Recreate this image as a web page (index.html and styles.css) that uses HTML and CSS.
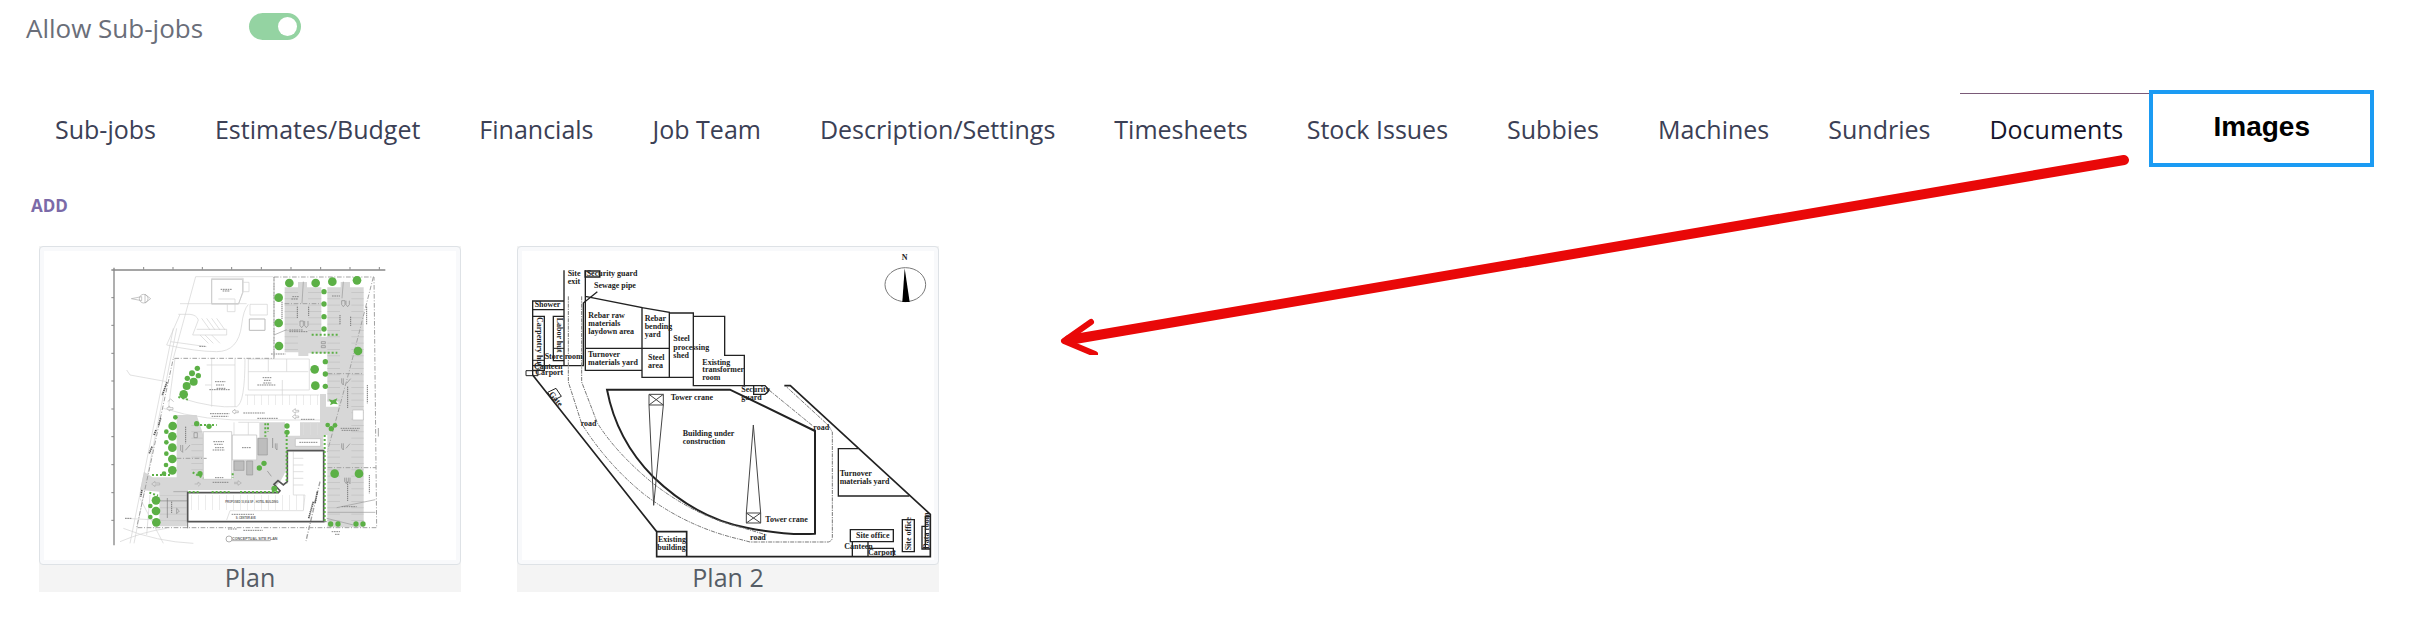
FILE: index.html
```html
<!DOCTYPE html>
<html lang="en">
<head>
  <meta charset="UTF-8" />
  <meta name="viewport" content="width=device-width, initial-scale=1.0"/>
  <title>Job - Images</title>

  <link rel="stylesheet" href="styles.css">
</head>

<body>
  <div class="setting">
    <label for="allowSubJobs">Allow Sub-jobs</label>
    <input type="checkbox" id="allowSubJobs" class="toggle" checked>
  </div>

  <nav class="tabs">
    <button class="tab">Sub-jobs</button>
    <button class="tab">Estimates/Budget</button>
    <button class="tab">Financials</button>
    <button class="tab">Job Team</button>
    <button class="tab">Description/Settings</button>
    <button class="tab">Timesheets</button>
    <button class="tab">Stock Issues</button>
    <button class="tab">Subbies</button>
    <button class="tab">Machines</button>
    <button class="tab">Sundries</button>
    <button class="tab active">Documents</button>
    <button class="tab-images">Images</button>
  </nav>

  <main class="content">
    <button class="add-button">ADD</button>

    <div class="gallery">
      <figure class="card">
        <div class="thumb">
          <svg viewBox="42 48 1236 928" role="img" aria-label="Site plan">
            <defs>
              <pattern id="bays" width="40" height="19" patternUnits="userSpaceOnUse">
                <path d="M0 1H40" stroke="#bbb" stroke-width="2"/>
              </pattern>
              <pattern id="stalls" width="21" height="40" patternUnits="userSpaceOnUse">
                <path d="M1 0V40" stroke="#ddd" stroke-width="2"/>
              </pattern>
            </defs>

            <!-- sheet frame -->
            <g fill="none" stroke="#888" stroke-width="4">
              <path d="M244 105H1066M252 98V931"/>
              <path stroke-width="3" d="M341 96v8M429 96v8M517 96v8M605 96v8M694 96v8M783 96v8M872 96v8M960 96v8M1048 96v8M244 188h8M244 271h8M244 355h8M244 438h8M244 522h8M244 605h8M244 689h8M244 773h8M244 856h8"/>
            </g>

            <!-- car parks -->
            <g fill="#d7d7d7">
              <path d="M764 157H804V141H831V157H874V305H892V157H932V141H960V157H1001V877H892V600H870V477H888V515H925V500H892V355H835V363H805V352H764Z"/>
              <path d="M440 540H500L520 600V733H608V676H680V608H688V562H765V602H810V562H880V645H770V700Q755 745 725 765H474V874H388V770L330 765L342 710L368 727H440Z"/>
            </g>
            <g fill="url(#bays)">
              <path d="M764 157H804V352H764ZM834 157H874V300H834ZM892 157H930V500H892ZM964 157H1001V865H964ZM892 620H930V865H892ZM484 560H518V720H484ZM390 780H470V870H390Z"/>
            </g>
            <g fill="url(#stalls)">
              <path d="M645 480H868V510H645ZM474 780H825V825H474ZM810 562H880V600H810Z"/>
            </g>
            <path d="M520 590H605V733H520ZM607 600H680V675H607ZM796 611H872V634H796ZM968 525H1000V555H968Z" fill="#fff" stroke="#bbb" stroke-width="2"/>
            <path d="M684 610H712V660H684ZM612 678H642V706H612ZM650 678H668V720H650Z" fill="#bdbdbd" stroke="#999" stroke-width="2"/>

            <!-- outlines of the lots and existing buildings -->
            <g fill="none" stroke="#d2d2d2" stroke-width="2">
              <path d="M497 125L430 370M497 125H730M545 130H640V170L625 208H545ZM565 192H615V230H592V208M640 142H657V170H640M450 206H650M660 208H712V240H660ZM445 238H480Q500 240 505 255L488 300H590V283H500M450 238L410 330M410 330Q500 350 560 350Q625 350 635 270Q640 225 655 208"/>
              <path d="M515 250L540 285M530 250L555 285M545 250L570 285M560 250L585 285M510 300L535 325M525 300L550 325M545 300L570 325"/>
              <path d="M430 280L300 925M440 280L312 925M422 320L530 335M435 370L415 520M290 405L300 420L410 440M455 490Q550 520 620 515Q645 505 645 370M400 520Q520 560 690 555H870"/>
              <path d="M545 372V515M615 372V515M655 372H838V465H655ZM655 410H835M715 372V410M770 372V410M645 480H868M757 435V480M530 390H615M525 450H545M612 562V600M655 562V600M625 562H688"/>
              <path d="M600 827H820L825 780M600 827L590 855M790 650V780H825M790 670H820M790 690H820M790 710H820M790 730H820M790 750H820M285 850L480 860M280 880Q380 920 490 925M270 920Q340 890 410 880M330 790L400 925M360 780L350 900"/>
              <path d="M658 252H705V286H658Z" stroke="#bbb" stroke-width="3"/>
              <path d="M545 133H638V172L626 206H545Z" stroke="#ccc" stroke-width="3"/>
            </g>

            <!-- site boundary -->
            <g fill="none" stroke="#a2a2a2" stroke-width="3" stroke-dasharray="14 5 3 5">
              <path d="M732 126H1032L1040 878H320L430 370H732Z"/>
              <path d="M732 126V370M1030 126L960 400L892 650M893 416H1001M893 698H1038M440 670H530M764 206H874"/>
              <path d="M870 740L828 918" stroke-width="4"/>
            </g>
            <path d="M893 832H1036M920 818L1036 794M732 300L770 284M820 140L816 205M940 140L936 190M390 797H474M430 770H474M890 850L970 870" fill="none" stroke="#999" stroke-width="2"/>

            <!-- proposed hotel -->
            <path d="M473 773H745L750 767L732 748L744 737L760 750L772 740V647H881V860H473Z" fill="none" stroke="#555" stroke-width="5"/>
            <path d="M473 860V880M881 860H890" stroke="#777" stroke-width="3"/>

            <!-- north arrow and flow arrows -->
            <g fill="none" stroke="#aaa" stroke-width="2">
              <path d="M304 191L335 185V197ZM362 191L345 178V204Z"/>
              <circle cx="341" cy="191" r="13"/>
              <path d="M365 747l10-8v5h14v6h-14v5zM494 747h10v-6l8 6l-8 7M612 742h12v-5l10 7l-10 7v-5h-12M413 500l9-8l9 8M410 520l9-7v5h10v6h-10v4zM606 530l9-7v5h10v5h-10v4zM787 528l9-7v5h10v5h-10v4zM787 545l9-7v5h10v5h-10v4z"/>
            </g>
            <g fill="none" stroke="#888" stroke-width="2">
              <path d="M810 258v14l5 6l5-6v-14zM824 258v14l5 6l5-6v-14M935 197v12l5 6l5-6v-12zM948 197v12l5 6l5-6v-12M874 320h12v6h-12zM874 332h12v6h-12zM935 430v14l5 6v-20M950 445l12-14M935 625v14l5 6v-20M948 640l12-14M944 728v12l5 6v-18M955 728v12l5 6v-18M452 630v16l6 6v-22M466 646l14-16M736 625v14l5 6v-20M712 708l12 16M492 593h10v15h-10zM440 820l8 8l-8 8z"/>
              <path d="M756 200V252M802 215V250M836 215V245M930 240V270M962 245V275M1010 215V270M953 455V520M1012 450V505M953 740V800M1018 720V775M1045 580V605M467 575V625M412 790V850M728 610V640M425 800V835" stroke="#777" stroke-width="3" stroke-dasharray="4 2"/>
              <path d="M787 185H808M784 192H804M906 183H930M778 290H834M778 285H820M723 357H766M813 553H855M932 580H990M935 586H985M935 815H980M572 163H606M578 168H600M508 334H526M555 440H586M558 450H582M560 460H586M538 464H600M698 428H726M702 436H722M700 444H724M682 450H738M540 536H598M545 544H595M640 534H705M682 550H744M550 620H582M553 628H578M555 638H582M548 645H584M636 638H662M548 742H596M808 622H862M555 728H580M605 838H672M905 890H930M915 898H930M640 886H698M285 850H305M594 882H620" stroke-width="3" stroke-dasharray="5 2"/>
              <path d="M411 442L396 482M392 550L386 570M378 585L372 600M366 635L358 655M336 765L332 785M850 800L836 850M862 770L855 805" stroke="#555" stroke-width="5" stroke-dasharray="4 2"/>
            </g>

            <g class="plan-text">
              <text x="586" y="805">PROPOSED 10,914 SF - HOTEL BUILDING</text>
              <text x="617" y="852">S. CENTER AVE</text>
              <text x="606" y="915" class="plan-title">CONCEPTUAL SITE PLAN</text>
            </g>
            <circle cx="597" cy="912" r="9" fill="none" stroke="#888" stroke-width="2"/>
            <path d="M606 917H722" stroke="#888" stroke-width="2"/>

            <!-- hedges -->
            <g fill="none" stroke="#5cb046" stroke-width="6" stroke-dasharray="6 6">
              <path d="M845 299H925M845 353H922M366 720H425M510 570H560M770 600V745"/>
              <path d="M884 600V858M476 771H510M545 771H600M630 771H745M706 565V605M714 565V590M488 712L520 730M608 715V728M358 773L384 782M445 486L474 494"/>
            </g>

            <!-- trees -->
            <g fill="#5cb046">
              <circle cx="778" cy="144" r="13"/><circle cx="857" cy="144" r="13"/><circle cx="907" cy="140" r="13"/><circle cx="981" cy="136" r="13"/>
              <circle cx="746" cy="188" r="13"/><circle cx="746" cy="264" r="13"/><circle cx="747" cy="333" r="13"/><circle cx="984" cy="348" r="13"/>
              <circle cx="854" cy="403" r="13"/><circle cx="856" cy="452" r="13"/><circle cx="914" cy="716" r="13"/><circle cx="987" cy="716" r="13"/>
              <circle cx="882" cy="170" r="8"/><circle cx="882" cy="207" r="8"/><circle cx="882" cy="245" r="8"/><circle cx="882" cy="282" r="8"/>
              <circle cx="886" cy="380" r="8"/><circle cx="886" cy="417" r="8"/><circle cx="886" cy="454" r="8"/>
              <circle cx="502" cy="400" r="8"/><circle cx="486" cy="415" r="9"/><circle cx="505" cy="422" r="8"/><circle cx="472" cy="430" r="8"/>
              <circle cx="491" cy="440" r="12"/><circle cx="470" cy="453" r="12"/><circle cx="461" cy="478" r="13"/>
              <circle cx="428" cy="573" r="13"/><circle cx="427" cy="604" r="13"/><circle cx="427" cy="638" r="13"/><circle cx="427" cy="672" r="13"/><circle cx="427" cy="706" r="13"/>
              <circle cx="409" cy="590" r="7"/><circle cx="409" cy="622" r="7"/><circle cx="409" cy="656" r="7"/><circle cx="408" cy="690" r="7"/><circle cx="402" cy="716" r="7"/><circle cx="436" cy="547" r="7"/>
              <circle cx="378" cy="796" r="13"/><circle cx="378" cy="828" r="13"/><circle cx="379" cy="862" r="13"/><circle cx="361" cy="813" r="7"/><circle cx="361" cy="846" r="7"/>
              <circle cx="500" cy="566" r="8"/><circle cx="537" cy="574" r="8"/><circle cx="510" cy="716" r="8"/><circle cx="771" cy="573" r="8"/><circle cx="771" cy="592" r="8"/>
              <circle cx="702" cy="685" r="8"/><circle cx="688" cy="699" r="8"/><circle cx="733" cy="761" r="9"/>
              <circle cx="893" cy="570" r="7"/><circle cx="915" cy="571" r="7"/><circle cx="904" cy="581" r="8"/>
              <circle cx="902" cy="867" r="8"/><circle cx="924" cy="867" r="8"/><circle cx="978" cy="867" r="8"/><circle cx="999" cy="867" r="8"/>
              <path d="M896 493L908 496L922 490L918 500L924 508L910 506L900 511L903 503Z"/>
            </g>
          </svg>
        </div>
        <figcaption>Plan</figcaption>
      </figure>

      <figure class="card">
        <div class="thumb">
          <svg viewBox="36 32 1236 928" role="img" aria-label="Construction site layout">
            <!-- outer boundary -->
            <g fill="none" stroke="#222" stroke-width="5">
              <path d="M68 404L440 874V949H1261V822L841 436H823"/>
              <path d="M440 874H530V949"/>
              <path d="M162 90V376M68 404V182H162M68 208H162M68 228H103V390H68M130 228H162V361H130ZM68 376H220V188L262 154" stroke-width="4"/>
              <path d="M48 391H84V406H48ZM130 324H162M68 360H103" stroke-width="3"/>
              <path d="M226 90V390H396V202L226 168M226 324H478M396 202L478 216V411H396V390M478 218H550V411H478M550 228H644V345H703V436M550 411V436H765L778 450L765 462H731V436" stroke-width="4"/>
              <path d="M226 92H269V110H226Z" stroke-width="5"/>
              <path d="M113 456L138 444L154 468L130 480Z" stroke-width="3"/>
            </g>

            <!-- building under construction -->
            <path d="M291 448H660L915 572V880Q830 886 710 862Q560 835 430 710Q320 600 291 448Z" fill="none" stroke="#222" stroke-width="6"/>

            <!-- roads -->
            <g fill="none" stroke="#777" stroke-width="3" stroke-dasharray="12 3 4 3">
              <path d="M175 168V425L215 550Q290 670 400 760Q530 860 690 897L720 905H955Q967 902 967 890V575L955 555L830 440"/>
              <path d="M215 168V425L262 548Q320 640 430 730Q560 830 700 863L770 884M778 450L910 558"/>
            </g>

            <!-- tower cranes -->
            <g fill="none" stroke="#444" stroke-width="3">
              <path d="M417 462H460V494H417ZM417 462L460 494M460 462L417 494M417 494L431 795L460 494"/>
              <path d="M709 818H752V848H709ZM709 818L752 848M752 818L709 848M709 818L730 554L752 818"/>
            </g>

            <!-- yards and offices -->
            <g fill="none" stroke="#222" stroke-width="4">
              <path d="M1044 625H985V767H1198"/>
              <path d="M1021 868H1150V904H1021ZM1027 904V949M1074 904V949M1074 924H1150V949M1177 838H1213V934H1177ZM1261 828H1246V926H1256M1246 858H1236V926H1261"/>
            </g>

            <!-- compass -->
            <ellipse cx="1186" cy="133" rx="61" ry="51" fill="none" stroke="#777" stroke-width="3"/>
            <path d="M1184 84L1199 185H1177Z" fill="#000"/>

            <g class="site-text">
              <text x="1175" y="59">N</text>
              <text x="173" y="108">Site</text>
              <text x="173" y="132">exit</text>
              <text x="230" y="108">Security guard</text>
              <text x="252" y="144">Sewage pipe</text>
              <text x="74" y="200">Shower</text>
              <text x="235" y="233">Rebar raw</text>
              <text x="235" y="256">materials</text>
              <text x="235" y="280">laydown area</text>
              <text x="404" y="242">Rebar</text>
              <text x="404" y="266">bending</text>
              <text x="404" y="290">yard</text>
              <text x="490" y="303">Steel</text>
              <text x="490" y="328">processing</text>
              <text x="490" y="352">shed</text>
              <text x="234" y="349">Turnover</text>
              <text x="234" y="373">materials yard</text>
              <text x="414" y="358">Steel</text>
              <text x="414" y="382">area</text>
              <text x="577" y="373">Existing</text>
              <text x="577" y="396">transformer</text>
              <text x="577" y="419">room</text>
              <text x="104" y="355">Store room</text>
              <text x="72" y="386">Canteen</text>
              <text x="76" y="404">Carport</text>
              <text transform="translate(80 230) rotate(90)">Carpentry hut</text>
              <text transform="translate(142 232) rotate(90)">Labor hut</text>
              <text transform="translate(116 462) rotate(50)">Gate</text>
              <text x="694" y="456">Security</text>
              <text x="694" y="479">guard</text>
              <text x="482" y="479">Tower crane</text>
              <text x="212" y="558">road</text>
              <text x="518" y="586">Building under</text>
              <text x="518" y="610">construction</text>
              <text x="910" y="568">road</text>
              <text x="989" y="708">Turnover</text>
              <text x="989" y="731">materials yard</text>
              <text x="766" y="845">Tower crane</text>
              <text x="720" y="899">road</text>
              <text x="444" y="905">Existing</text>
              <text x="442" y="928">building</text>
              <text x="1038" y="892">Site office</text>
              <text x="1003" y="925">Canteen</text>
              <text x="1074" y="945">Carport</text>
              <text transform="translate(1204 930) rotate(-90)">Site office</text>
              <text transform="translate(1257 926) rotate(-90)">Data room</text>
            </g>
          </svg>
        </div>
        <figcaption>Plan 2</figcaption>
      </figure>
    </div>
  </main>

  <!-- pointer from the Images tab to the gallery -->
  <svg class="pointer" viewBox="0 0 1080 210" aria-hidden="true">
    <path d="M1069 15L14 195" stroke-width="10"/>
    <path d="M36 177L9 196L40 209" stroke-width="6"/>
  </svg>
</body>
</html>
```

FILE: styles.css
```css
* {
  box-sizing: border-box;
}

body {
  margin: 0;
  position: relative;
  background: #fff;
  color: #3b4055;
  font-family: 'Open Sans', 'Noto Sans', sans-serif;
  font-size: 25px;
  line-height: 32px;
}

button {
  border: none;
  background: none;
  font: inherit;
  color: inherit;
  cursor: pointer;
}

.setting {
  display: flex;
  align-items: center;
  gap: 46px;
  padding: 12px 26px 0;
  color: #6a6e79;
  font-size: 26px;
}

.toggle {
  appearance: none;
  width: 52px;
  height: 27px;
  margin: 0 0 4px;
  padding: 4px;
  border-radius: 14px;
  background: #94d3a2;
  cursor: pointer;
}

.toggle::before {
  content: '';
  display: block;
  width: 19px;
  height: 19px;
  border-radius: 50%;
  background: #fff;
}

.toggle:checked::before {
  margin-left: auto;
}

.tabs {
  display: flex;
  align-items: center;
  gap: 1px;
  margin-top: 46px;
  padding: 0 26px;
}

.tab {
  height: 71px;
  padding: 0 29px;
  border-top: 1px solid transparent;
  white-space: nowrap;
}

.tab.active {
  border-top-color: #7a5a78;
  color: #15152c;
}

.tab-images {
  width: 225px;
  height: 77px;
  margin-left: -4px;
  padding: 0 0 4px;
  border: 4px solid #1b9bf3;
  background: #fff;
  color: #000;
  font-family: 'Liberation Sans', Arial, sans-serif;
  font-size: 28px;
  font-weight: bold;
}

.content {
  padding: 23px 39px;
}

.add-button {
  display: block;
  margin-left: -8px;
  padding: 0;
  color: #7b6aa8;
  font-size: 17px;
  font-weight: 700;
}

.gallery {
  display: flex;
  flex-wrap: wrap;
  gap: 56px;
  margin-top: 24px;
}

.card {
  width: 422px;
  margin: 0;
  background: #f4f4f4;
}

.thumb {
  padding: 4px;
  border: 1px solid #dee2e6;
  border-radius: 4px;
  background: #f8f9fb;
}

.thumb svg {
  display: block;
  width: 100%;
  background: #fff;
}

figcaption {
  padding-bottom: 2px;
  color: #565d66;
  line-height: 25px;
  text-align: center;
}

.plan-text {
  fill: #666;
  font-family: 'Liberation Sans', Arial, sans-serif;
  font-size: 8px;
  font-weight: bold;
}

.plan-title {
  font-size: 11px;
}

.site-text {
  fill: #222;
  font-family: 'Liberation Serif', 'Times New Roman', serif;
  font-size: 24px;
  font-weight: bold;
}

.pointer {
  position: absolute;
  top: 145px;
  left: 1055px;
  width: 1080px;
  fill: none;
  stroke: #e90808;
  stroke-linecap: round;
  stroke-linejoin: round;
  pointer-events: none;
}
```
